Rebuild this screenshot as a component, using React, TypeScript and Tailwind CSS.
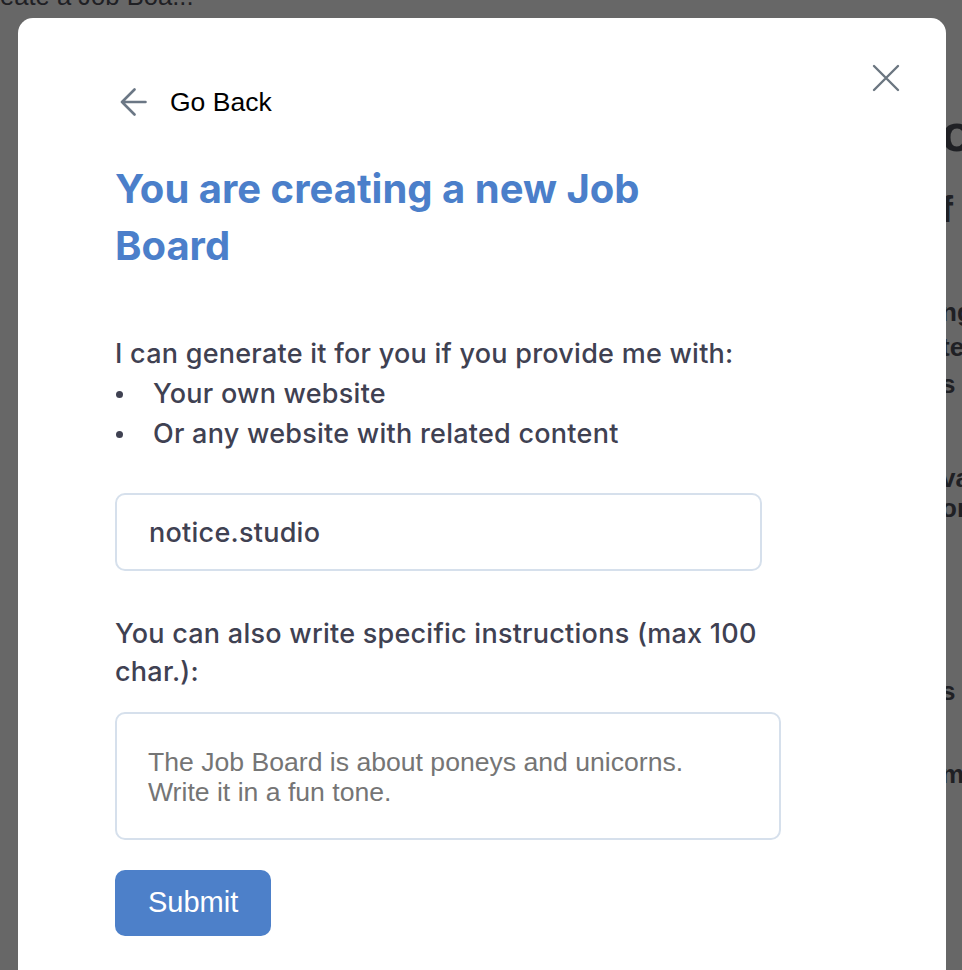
import { useState } from "react";

// fragments of the page that peek out to the right of the dialog
const PEEK = [
  { text: "o", cls: "mt-[96px] text-[52px] font-bold" },
  { text: "f", cls: "mt-[33px] text-[36px] font-bold" },
  { text: "ng", cls: "mt-[71px] text-[26px] font-bold" },
  { text: "te", cls: "mt-[9px] text-[26px] font-bold" },
  { text: "s", cls: "mt-[11px] text-[26px] font-bold" },
  { text: "va", cls: "mt-[68px] text-[26px] font-bold" },
  { text: "or", cls: "mt-[4px] text-[26px] font-bold" },
  { text: "s a", cls: "mt-[157px] text-[26px] font-bold" },
  { text: "m", cls: "mt-[57px] text-[26px] font-bold" },
];

function BackgroundPage() {
  return (
    <div className="flex flex-col text-[#1f2024] font-['Liberation_Sans',Arial,sans-serif]">
      <div className="-ml-[27px] -mt-[18px] h-[29px] whitespace-nowrap text-[25.6px] leading-[29px]">
        Create a Job Boa...
      </div>
      <div className="flex flex-col pl-[941px]">
        {PEEK.map((p, i) => (
          <div key={i} className={`${p.cls} leading-none whitespace-nowrap`}>
            {p.text}
          </div>
        ))}
      </div>
    </div>
  );
}

export default function App() {
  const [site, setSite] = useState("notice.studio");
  const [notes, setNotes] = useState("");

  return (
    <div className="relative h-[970px] w-full overflow-hidden bg-[#676767]">
      <BackgroundPage />

      {/* ── Dialog ── */}
      <div className="absolute inset-0 z-10">
        <div className="relative ml-[18px] mt-[18px] min-h-[1000px] w-[928px] rounded-[15px] bg-white pl-[97px] pt-[70px]">
          <button className="absolute right-[46px] top-[46px] text-[#6b7680]" aria-label="Close">
            <svg width="28" height="28" viewBox="0 0 28 28" fill="none" stroke="currentColor" strokeWidth="2.4" strokeLinecap="round">
              <path d="M2 2 26 26M26 2 2 26" />
            </svg>
          </button>

          <button className="flex h-[28px] items-center gap-[23px] font-['Liberation_Sans',Arial,sans-serif] text-[26.5px] leading-[28px] text-black">
            <svg width="32" height="28" viewBox="0 0 32 28" fill="none" stroke="#6b7785" strokeWidth="2.6" strokeLinecap="round" strokeLinejoin="round">
              <path d="M19.5 1.5 7 14l12.5 12.5M7 14h23.5" />
            </svg>
            Go Back
          </button>

          <div className="flex w-[666px] flex-col font-['Inter',sans-serif]">
            <h1 className="mt-[43.5px] max-w-[560px] text-[40px] font-bold leading-[57.4px] text-[#4b7fca]">
              You are creating a new Job Board
            </h1>

            <div className="mt-[60px] text-[27px] font-medium leading-[39.6px] tracking-[0.25px] text-[#3f4152]">
              <p>I can generate it for you if you provide me with:</p>
              <ul>
                {["Your own website", "Or any website with related content"].map(item => (
                  <li key={item} className="flex items-center">
                    <span className="mr-[30.5px] ml-[0.5px] mt-[2px] h-[7px] w-[7px] shrink-0 rounded-full bg-[#3f4152]" />
                    {item}
                  </li>
                ))}
              </ul>
            </div>

            <input
              value={site}
              onChange={e => setSite(e.target.value)}
              className="mt-[40px] h-[78px] w-[647px] rounded-[10px] border-2 border-[#d6e0ec] px-[32px] text-[27px] font-medium tracking-[0.25px] text-[#3f4152] outline-none"
            />

            <label className="mt-[44px] text-[27px] font-medium leading-[38px] tracking-[0.25px] text-[#3f4152]">
              You can also write specific instructions (max 100 char.):
            </label>

            <textarea
              value={notes}
              onChange={e => setNotes(e.target.value)}
              maxLength={100}
              placeholder="The Job Board is about poneys and unicorns. Write it in a fun tone."
              className="mt-[21px] h-[128px] w-[666px] resize-none rounded-[10px] border-2 border-[#d6e0ec] px-[31px] pt-[32.5px] font-['Liberation_Sans',Arial,sans-serif] text-[26.6px] leading-[30px] text-[#3f4152] outline-none placeholder:text-[#757575]"
            />

            <div className="mt-[30px]">
              <button className="h-[66px] rounded-[10px] bg-[#4d80c9] px-[33px] font-['Liberation_Sans',Arial,sans-serif] text-[29px] text-white">
                Submit
              </button>
            </div>
          </div>
        </div>
      </div>
    </div>
  );
}
